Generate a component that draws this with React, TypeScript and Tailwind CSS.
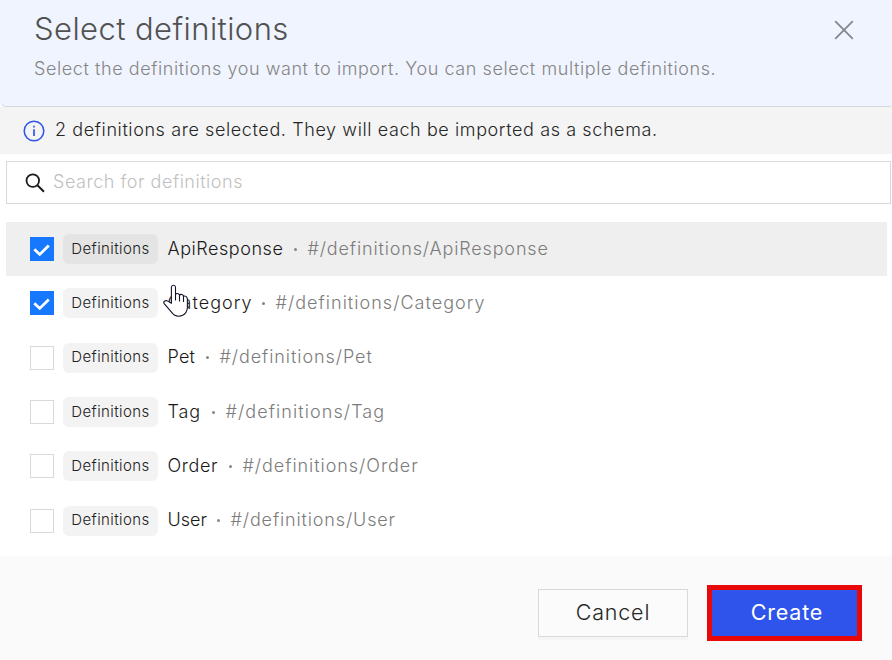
interface Definition {
  name: string;
  selected: boolean;
  hovered?: boolean;
  nameClass: string;
  pathClass: string;
}

const definitions: Definition[] = [
  { name: "ApiResponse", selected: true, hovered: true, nameClass: "w-[116px] tracking-[0.55px]", pathClass: "tracking-[0.85px]" },
  { name: "Category", selected: true, nameClass: "w-[84px] tracking-[1px]", pathClass: "tracking-[1.03px]" },
  { name: "Pet", selected: false, nameClass: "w-[28px] tracking-[0.2px]", pathClass: "tracking-[0.92px]" },
  { name: "Tag", selected: false, nameClass: "w-[34px] tracking-[0.9px]", pathClass: "tracking-[1.08px]" },
  { name: "Order", selected: false, nameClass: "w-[51px] tracking-[0.6px]", pathClass: "tracking-[0.95px]" },
  { name: "User", selected: false, nameClass: "w-[39px] tracking-normal", pathClass: "tracking-[0.86px]" },
];

function Checkbox({ checked }: { checked: boolean }) {
  return checked ? (
    <span className="flex size-6 shrink-0 bg-[#1677ff]">
      <svg viewBox="0 0 24 24" className="size-6" fill="none" stroke="#fff" strokeWidth="2.8">
        <path d="M4.3 12.2 9.7 17.4 18.8 8.4" />
      </svg>
    </span>
  ) : (
    <span className="size-6 shrink-0 border border-[#d9d9d9] bg-white" />
  );
}

function HandCursor() {
  return (
    <svg viewBox="0 0 27 33" className="absolute left-[163px] top-[284px] h-[33px] w-[27px]" aria-hidden="true">
      <path
        d="M8.4 19.3V3.3Q8.5 1.3 10.5 1.3Q12.4 1.3 12.5 3.3V10.5Q13.1 9.3 14.7 9.5Q16.3 9.7 16.5 11.2Q17.4 10.1 18.9 10.5Q20.3 10.9 20.5 12.3Q21.7 11.6 23 12.4Q24.3 13.2 24.4 15.2V23.5Q24.3 26.4 22.8 28.7Q20 32.3 15.5 32.2Q11.4 32 8.9 28.6L1.2 19.6Q.2 18 1.7 17Q3.2 16.1 4.8 17.1Z"
        fill="#fff"
        stroke="#141426"
        strokeWidth="1.1"
        strokeLinejoin="round"
      />
      <path d="M12.5 10V16M16.5 11V17M20.5 12V17.5" fill="none" stroke="#141426" strokeWidth="1.1" strokeLinecap="round" />
    </svg>
  );
}

function DefinitionRow({ item }: { item: Definition }) {
  return (
    <li className={`flex h-[54.35px] items-start pl-6 ${item.hovered ? "bg-[#efefef]" : "bg-white"}`}>
      <div className="flex h-[54px] items-center">
        <Checkbox checked={item.selected} />
        <span
          className={`ml-[9px] flex h-[30px] w-[95px] items-center justify-center rounded-md text-[15px] tracking-[0.4px] text-[#202020] ${item.hovered ? "bg-[#e4e4e4]" : "bg-[#f3f3f3]"}`}
        >
          Definitions
        </span>
        <span className={`mb-[1.5px] ml-[9.5px] whitespace-nowrap text-[#191919] ${item.nameClass}`}>{item.name}</span>
        <span className="ml-[0.5px] flex w-[23.5px] justify-center">
          <span className="size-[3px] rounded-full bg-[#858585]" />
        </span>
        <span className={`mb-[1.5px] whitespace-nowrap text-[#7c7c7c] ${item.pathClass}`}>#/definitions/{item.name}</span>
      </div>
    </li>
  );
}

export default function App() {
  return (
    <main className="relative flex h-[660px] w-[892px] flex-col overflow-hidden bg-white font-['Inter','Open_Sans',sans-serif] text-[18px] font-light">
      <div className="h-[107px] shrink-0 bg-white">
        <header className="flex h-[107px] justify-between rounded-bl-[6px] rounded-br-[2px] border-b border-[#d6d8df] bg-[#f0f4ff] pl-[34px] pr-[38px]">
          <div>
            <h1 className="mt-[9px] whitespace-nowrap text-[31px] leading-10 tracking-[0.42px] text-[#525252]">Select definitions</h1>
            <p className="mt-2 whitespace-nowrap leading-6 tracking-[0.58px] text-[#858585]">
              Select the definitions you want to import. You can select multiple definitions.
            </p>
          </div>
          <button aria-label="Close" className="mt-5 size-5">
            <svg viewBox="0 0 20 20" className="size-5" fill="none" stroke="#85878c" strokeWidth="1.8">
              <path d="M1.2 1.2 18.8 18.8M18.8 1.2 1.2 18.8" />
            </svg>
          </button>
        </header>
      </div>

      <div className="flex h-[47px] shrink-0 items-center bg-[#f4f4f4] pl-[23px]">
        <svg viewBox="0 0 22 22" className="size-[22px]" fill="none" stroke="#2f54eb">
          <circle cx="11" cy="11" r="9.8" strokeWidth="1.5" />
          <path d="M11 9.2V16M11 5.8V7.6" strokeWidth="1.7" />
        </svg>
        <p className="mb-[3px] ml-2.5 whitespace-nowrap tracking-[0.6px] text-[#262626]">
          2 definitions are selected. They will each be imported as a schema.
        </p>
      </div>

      <label className="ml-1.5 mr-px mt-[7px] flex h-[43px] shrink-0 items-center border border-[#d9d9d9] bg-white pl-[18px]">
        <svg viewBox="0 0 20 20" className="size-5" fill="none" stroke="#1c1c1c" strokeWidth="1.8">
          <circle cx="7.8" cy="7.6" r="6.3" />
          <path d="M12.4 12.2 19 18.8" strokeWidth="2" />
        </svg>
        <span className="mb-0.5 ml-2 whitespace-nowrap tracking-[0.53px] text-[#bfbfbf]">Search for definitions</span>
      </label>

      <ul className="ml-1.5 mr-[5px] mt-[18px] h-[334px] shrink-0">
        {definitions.map((item) => (
          <DefinitionRow key={item.name} item={item} />
        ))}
      </ul>

      <footer className="flex h-[104px] shrink-0 items-start justify-end bg-[#fafafa] pr-[30px] pt-[29px] text-[21.5px]">
        <button className="mt-1 h-12 w-[150px] border border-[#d9d9d9] bg-[#fbfbfb] pb-0.5 tracking-[0.8px] text-[#262626] shadow-[0_3px_0_#f5f5f5]">
          Cancel
        </button>
        <button className="ml-[19px] h-14 w-[155px] border-5 border-[#e90808] bg-[#2f54eb] pb-0.5 pl-[5px] font-normal tracking-[0.8px] text-white">
          Create
        </button>
      </footer>

      <HandCursor />
    </main>
  );
}
